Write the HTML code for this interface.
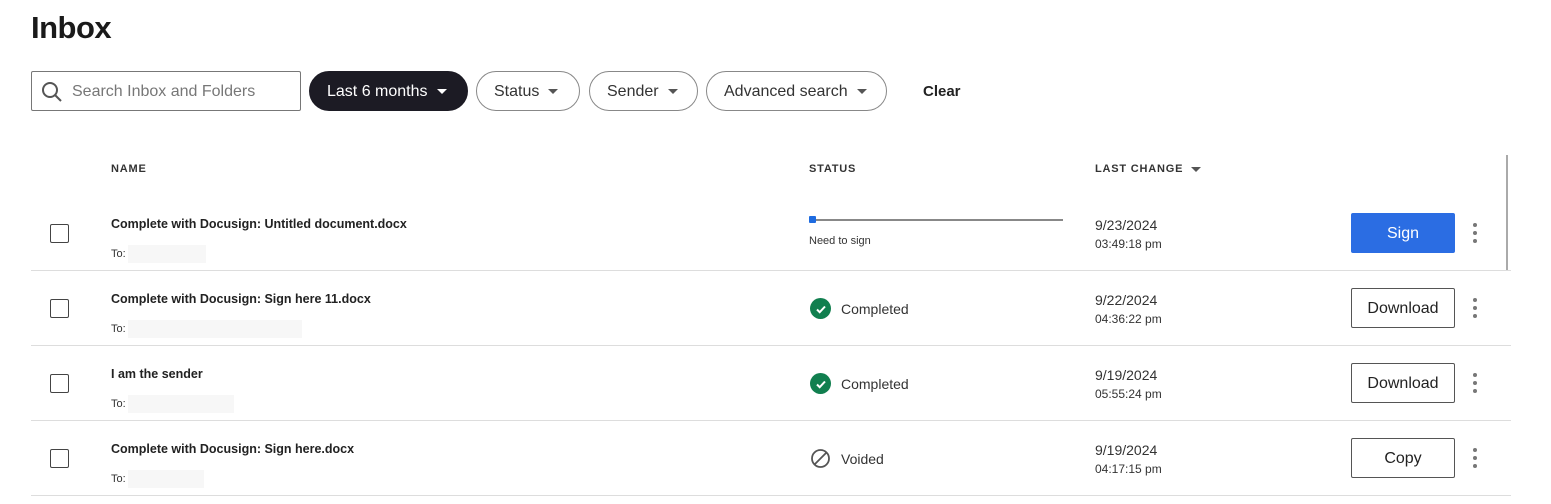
<!DOCTYPE html>
<html><head><style>
*{margin:0;padding:0;box-sizing:border-box}
body{width:1551px;height:504px;background:#fff;font-family:"Liberation Sans",sans-serif;color:#1e1e1e;position:relative;overflow:hidden}
.a{position:absolute}
h1{position:absolute;left:31px;top:10px;font-size:31px;font-weight:bold;letter-spacing:-0.5px;color:#1a1a1a}
.pill{position:absolute;top:71px;height:40px;border:1px solid #888;border-radius:20px;font-size:16px;line-height:40px;padding-left:17px;color:#333}
.tri{display:inline-block;width:0;height:0;border-left:5px solid transparent;border-right:5px solid transparent;border-top:5px solid #555;vertical-align:middle;margin-left:9px}
.hd{position:absolute;top:163px;font-size:11px;font-weight:bold;letter-spacing:.8px;color:#333}
.sep{position:absolute;left:31px;width:1480px;height:1px;background:#ddd}
.cb{position:absolute;left:50px;width:19px;height:19px;border:1.5px solid #444;border-radius:2px}
.nm{position:absolute;left:111px;font-size:12.5px;font-weight:bold;color:#222}
.to{position:absolute;left:111px;font-size:11px;color:#333}
.blur{display:inline-block;height:18px;background:#f7f7f7;vertical-align:middle;margin-left:2px}
.dt{position:absolute;left:1095px;font-size:14px;color:#333}
.tm{position:absolute;left:1095px;font-size:12px;color:#333}
.btn{position:absolute;left:1351px;width:104px;height:40px;border:1px solid #555;border-radius:2px;font-size:16px;text-align:center;line-height:40px;color:#222}
.keb{position:absolute;left:1473px;width:4px}
.keb i{display:block;width:4px;height:4px;border-radius:2px;background:#777;margin-bottom:4px}
.st{position:absolute;left:810px;font-size:14px;color:#333;display:flex;align-items:center}
.chk{width:21px;height:21px;border-radius:50%;background:#117f4f;margin-right:10px;display:flex;align-items:center;justify-content:center}
</style></head><body>
<h1>Inbox</h1>
<div class="a" style="left:31px;top:71px;width:270px;height:40px;border:1px solid #777;border-radius:2px"></div>
<svg class="a" style="left:40px;top:80px" width="24" height="24" viewBox="0 0 24 24"><circle cx="10" cy="10" r="7" fill="none" stroke="#555" stroke-width="2"/><line x1="15" y1="15" x2="21" y2="21" stroke="#555" stroke-width="2"/></svg>
<div class="a" style="left:72px;top:83px;font-size:16px;color:#777">Search Inbox and Folders</div>
<div class="pill" style="left:309px;width:159px;background:#1c1b24;border-color:#1c1b24;color:#fff">Last 6 months<span class="tri" style="border-top-color:#fff"></span></div>
<div class="pill" style="left:476px;width:104px">Status<span class="tri"></span></div>
<div class="pill" style="left:589px;width:109px">Sender<span class="tri"></span></div>
<div class="pill" style="left:706px;width:181px">Advanced search<span class="tri"></span></div>
<div class="a" style="left:923px;top:83px;font-size:15px;font-weight:bold;color:#222">Clear</div>

<div class="hd" style="left:111px">NAME</div>
<div class="hd" style="left:809px">STATUS</div>
<div class="hd" style="left:1095px">LAST CHANGE<span class="tri" style="margin-left:8px"></span></div>
<div class="a" style="left:1506px;top:155px;width:2px;height:116px;background:#aaa"></div>

<div class="sep" style="top:270px"></div>
<div class="sep" style="top:345px"></div>
<div class="sep" style="top:420px"></div>
<div class="sep" style="top:495px"></div>

<div class="cb" style="top:224px"></div>
<div class="nm" style="top:217px">Complete with Docusign: Untitled document.docx</div>
<div class="to" style="top:245px">To:<span class="blur" style="width:78px"></span></div>
<div class="a" style="left:809px;top:219px;width:254px;height:2px;background:#888"></div>
<div class="a" style="left:809px;top:216px;width:7px;height:7px;background:#1e6be0;border-radius:1px"></div>
<div class="a" style="left:809px;top:235px;font-size:11px;color:#333">Need to sign</div>
<div class="dt" style="top:217px">9/23/2024</div>
<div class="tm" style="top:237px">03:49:18 pm</div>
<div class="btn" style="top:213px;background:#2b6de3;border-color:#2b6de3;color:#fff">Sign</div>
<div class="keb" style="top:223px"><i></i><i></i><i></i></div>

<div class="cb" style="top:299px"></div>
<div class="nm" style="top:292px">Complete with Docusign: Sign here 11.docx</div>
<div class="to" style="top:320px">To:<span class="blur" style="width:174px"></span></div>
<div class="st" style="top:298px"><div class="chk"><svg width="12" height="12" viewBox="0 0 12 12"><path d="M2 6.5l2.7 2.7L10 3.5" fill="none" stroke="#fff" stroke-width="2"/></svg></div>Completed</div>
<div class="dt" style="top:292px">9/22/2024</div>
<div class="tm" style="top:312px">04:36:22 pm</div>
<div class="btn" style="top:288px">Download</div>
<div class="keb" style="top:298px"><i></i><i></i><i></i></div>

<div class="cb" style="top:374px"></div>
<div class="nm" style="top:367px">I am the sender</div>
<div class="to" style="top:395px">To:<span class="blur" style="width:106px"></span></div>
<div class="st" style="top:373px"><div class="chk"><svg width="12" height="12" viewBox="0 0 12 12"><path d="M2 6.5l2.7 2.7L10 3.5" fill="none" stroke="#fff" stroke-width="2"/></svg></div>Completed</div>
<div class="dt" style="top:367px">9/19/2024</div>
<div class="tm" style="top:387px">05:55:24 pm</div>
<div class="btn" style="top:363px">Download</div>
<div class="keb" style="top:373px"><i></i><i></i><i></i></div>

<div class="cb" style="top:449px"></div>
<div class="nm" style="top:442px">Complete with Docusign: Sign here.docx</div>
<div class="to" style="top:470px">To:<span class="blur" style="width:76px"></span></div>
<div class="st" style="top:448px"><svg width="21" height="21" viewBox="0 0 21 21" style="margin-right:10px"><circle cx="10.5" cy="10.5" r="8.5" fill="none" stroke="#555" stroke-width="1.8"/><line x1="4.5" y1="16.5" x2="16.5" y2="4.5" stroke="#555" stroke-width="1.8"/></svg>Voided</div>
<div class="dt" style="top:442px">9/19/2024</div>
<div class="tm" style="top:462px">04:17:15 pm</div>
<div class="btn" style="top:438px">Copy</div>
<div class="keb" style="top:448px"><i></i><i></i><i></i></div>
</body></html>
